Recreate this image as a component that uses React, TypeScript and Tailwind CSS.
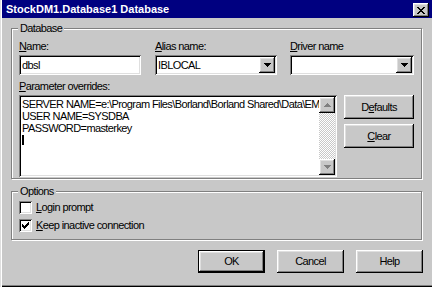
import React from "react";

const raised =
  "bg-[#c8c8c8] shadow-[inset_-1px_-1px_0_#000,inset_1px_1px_0_#fff,inset_-2px_-2px_0_#808080,inset_2px_2px_0_#dfdfdf]";
const defaultRaised =
  "bg-[#c8c8c8] shadow-[inset_0_0_0_1px_#000,inset_-2px_-2px_0_#000,inset_2px_2px_0_#fff,inset_-3px_-3px_0_#808080,inset_3px_3px_0_#dfdfdf]";
const sunken =
  "bg-white shadow-[inset_1px_1px_0_#808080,inset_-1px_-1px_0_#fff,inset_2px_2px_0_#000,inset_-2px_-2px_0_#dfdfdf]";

const CLOSE = ["XX....XX", ".XX..XX.", "..XXXX..", "...XX...", "..XXXX..", ".XX..XX.", "XX....XX"];
const CHECK = ["......X", ".....XX", "X...XXX", "XX.XXX.", "XXXXX..", ".XXX...", "..X...."];
const DOWN = ["XXXXXXX", ".XXXXX.", "..XXX..", "...X..."];
const UP = ["...X...", "..XXX..", ".XXXXX.", "XXXXXXX"];

function Pixels({ rows, color }: { rows: string[]; color: string }) {
  const w = rows[0].length;
  const h = rows.length;
  return (
    <svg width={w} height={h} viewBox={`0 0 ${w} ${h}`} shapeRendering="crispEdges" className="block">
      {rows.flatMap((r, y) =>
        r.split("").map((c, x) =>
          c === "X" ? <rect key={`${x}-${y}`} x={x} y={y} width={1} height={1} fill={color} /> : null
        )
      )}
    </svg>
  );
}

function Group({ title, className, children }: { title: string; className: string; children: React.ReactNode }) {
  return (
    <div className={`relative w-[411px] border border-[#808080] shadow-[inset_1px_1px_0_#fff,1px_1px_0_#fff] ${className}`}>
      <span className="absolute top-[-7px] left-[6px] px-[2px] bg-[#c8c8c8] leading-[13px]">{title}</span>
      {children}
    </div>
  );
}

function Combo({ value, className }: { value: string; className: string }) {
  return (
    <div className={`h-[20px] p-[2px] flex ${sunken} ${className}`}>
      <div className="flex-1 pl-[1px] leading-[16px] overflow-hidden whitespace-nowrap">{value}</div>
      <div className={`w-[16px] h-[16px] flex items-center justify-center ${raised}`}>
        <Pixels rows={DOWN} color="#000" />
      </div>
    </div>
  );
}

function Check({ checked, children }: { checked?: boolean; children: React.ReactNode }) {
  return (
    <div className="flex items-center h-[13px]">
      <div className={`w-[13px] h-[13px] flex items-center justify-center ${sunken}`}>
        {checked && <Pixels rows={CHECK} color="#000" />}
      </div>
      <span className="ml-[4px] leading-[13px]">{children}</span>
    </div>
  );
}

const U = ({ children }: { children: React.ReactNode }) => (
  <span className="underline underline-offset-1">{children}</span>
);

export default function App() {
  return (
    <div className="w-[432px] h-[287px] overflow-hidden bg-[#c8c8c8] pl-[2px] flex flex-col text-[11px] text-black font-['Liberation_Sans',Arial,sans-serif] tracking-[-0.6px] shadow-[inset_1px_0_0_#dfdfdf,inset_2px_0_0_#fff,inset_0_-1px_0_#000,inset_0_-2px_0_#808080]">
      <div className="h-[18px] shrink-0 bg-[#000080] flex pl-[4px] pr-[3px]">
        <span className="text-white font-bold leading-[18px] tracking-normal">StockDM1.Database1 Database</span>
        <div className={`ml-auto mt-[3px] w-[16px] h-[14px] flex items-center justify-center ${raised}`}>
          <Pixels rows={CLOSE} color="#000" />
        </div>
      </div>

      <div className="flex flex-col pl-[9px]">
        <Group title="Database" className="mt-[10px] pt-[11px] px-[7px] pb-[1px]">
          <div className="flex">
            <div className="w-[122px]">
              <div className="h-[13px] leading-[13px]"><U>N</U>ame:</div>
              <div className={`mt-[2px] h-[20px] p-[2px] ${sunken}`}>
                <div className="pl-[1px] leading-[16px]">dbsl</div>
              </div>
            </div>
            <div className="w-[122px] ml-[14px]">
              <div className="h-[13px] leading-[13px]"><U>A</U>lias name:</div>
              <Combo value="IBLOCAL" className="mt-[2px]" />
            </div>
            <div className="w-[124px] ml-[13px]">
              <div className="h-[13px] leading-[13px]"><U>D</U>river name</div>
              <Combo value="" className="mt-[2px]" />
            </div>
          </div>

          <div className="mt-[5px] h-[13px] leading-[13px]"><U>P</U>arameter overrides:</div>
          <div className="mt-[2px] flex">
            <div className={`w-[318px] h-[82px] p-[2px] flex ${sunken}`}>
              <div className="flex-1 overflow-hidden whitespace-nowrap pl-[1px] pt-[1px] leading-[12px]">
                <div>SERVER NAME=e:\Program Files\Borland\Borland Shared\Data\EMPLOYEE.GDB</div>
                <div>USER NAME=SYSDBA</div>
                <div>PASSWORD=masterkey</div>
                <div className="mt-[1px] w-[2px] h-[10px] bg-black" />
              </div>
              <div className="w-[16px] flex flex-col">
                <div className={`h-[16px] flex items-center justify-center ${raised}`}>
                  <Pixels rows={UP} color="#808080" />
                </div>
                <div className="flex-1 bg-[conic-gradient(#c8c8c8_25%,#fff_0_50%,#c8c8c8_0_75%,#fff_0)] bg-[length:2px_2px]" />
                <div className={`h-[16px] flex items-center justify-center ${raised}`}>
                  <Pixels rows={DOWN} color="#808080" />
                </div>
              </div>
            </div>
            <div className="ml-[7px] w-[70px] flex flex-col gap-[5px]">
              <div className={`h-[24px] flex items-center justify-center ${raised}`}>
                <span>D<U>e</U>faults</span>
              </div>
              <div className={`h-[24px] flex items-center justify-center ${raised}`}>
                <span><U>C</U>lear</span>
              </div>
            </div>
          </div>
        </Group>

        <Group title="Options" className="mt-[12px] pt-[9px] px-[7px] pb-[7px]">
          <div className="flex flex-col gap-[5px]">
            <Check><U>L</U>ogin prompt</Check>
            <Check checked><U>K</U>eep inactive connection</Check>
          </div>
        </Group>

        <div className="mt-[10px] pr-[9px] flex justify-end gap-[12px]">
          <div className={`w-[67px] h-[23px] flex items-center justify-center ${defaultRaised}`}>OK</div>
          <div className={`w-[67px] h-[23px] flex items-center justify-center ${raised}`}>Cancel</div>
          <div className={`w-[67px] h-[23px] flex items-center justify-center ${raised}`}>Help</div>
        </div>
      </div>
    </div>
  );
}
